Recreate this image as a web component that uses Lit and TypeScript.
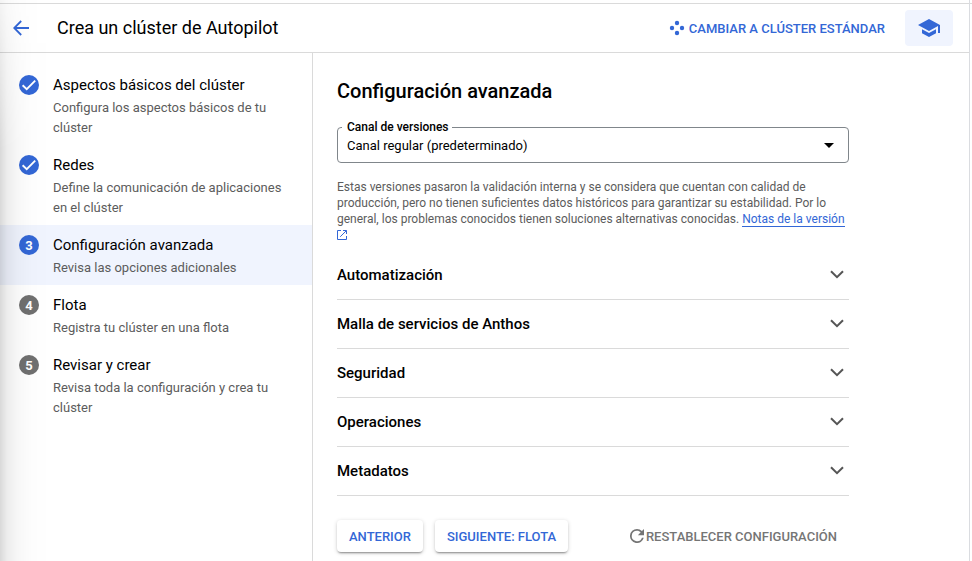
import { LitElement, html, css } from "lit";
import { customElement, property } from "lit/decorators.js";

interface Step {
  title: string;
  text: string;
  state: "done" | "current" | "pending";
}

const STEPS: Step[] = [
  { title: "Aspectos básicos del clúster", text: "Configura los aspectos básicos de tu clúster", state: "done" },
  { title: "Redes", text: "Define la comunicación de aplicaciones en el clúster", state: "done" },
  { title: "Configuración avanzada", text: "Revisa las opciones adicionales", state: "current" },
  { title: "Flota", text: "Registra tu clúster en una flota", state: "pending" },
  { title: "Revisar y crear", text: "Revisa toda la configuración y crea tu clúster", state: "pending" },
];

const SECTIONS = ["Automatización", "Malla de servicios de Anthos", "Seguridad", "Operaciones", "Metadatos"];

@customElement("step-list")
class StepList extends LitElement {
  @property({ attribute: false }) steps: Step[] = [];

  static styles = css`
    :host { display: block; padding-top: 12px; }
    .step { display: flex; padding: 10px 20px 7px 19px; }
    .current { background: #f0f4fe; }
    .badge {
      flex: none; width: 20px; height: 20px; border-radius: 50%; margin-right: 14px;
      display: flex; align-items: center; justify-content: center;
      background: #3367d6; color: #fff; font-size: 13px; font-weight: 700; line-height: 20px;
    }
    .number { padding-top: 2px; }
    .pending .badge { background: #707070; }
    .title { font-size: 15px; line-height: 20px; color: #000; }
    .text { margin-top: 3px; font-size: 13px; line-height: 20px; color: #5c5c5c; }
    svg { display: block; }
  `;

  render() {
    return this.steps.map(
      (s, i) => html`<div class="step ${s.state}">
        <div class="badge">
          ${s.state === "done"
            ? html`<svg width="20" height="20" viewBox="0 0 20 20">
                <path d="M3.6 10.2 7.7 14.1 16.2 5.6" fill="none" stroke="#fff" stroke-width="1.9" />
              </svg>`
            : html`<span class="number">${i + 1}</span>`}
        </div>
        <div>
          <div class="title">${s.title}</div>
          <div class="text">${s.text}</div>
        </div>
      </div>`
    );
  }
}

@customElement("app-root")
class AppRoot extends LitElement {
  static styles = css`
    :host {
      display: block; position: relative; width: 972px; height: 561px; overflow: hidden;
      background: #fff; font-family: Roboto, sans-serif; color: #000;
    }
    svg { display: block; flex: none; }
    .frame { display: flex; height: 561px; }
    .panel { width: 969px; display: flex; flex-direction: column; }
    .gutter { flex: 1; border-left: 1px solid #dadce0; box-sizing: border-box; }
    .edge, .gutter::before { content: ""; display: block; height: 1px; margin-top: 3px; background: #dadada; }
    .edge { flex: none; }
    header {
      display: flex; align-items: center; height: 48px; flex: none;
      border-bottom: 1px solid #dadada; padding: 0 16px 0 13px;
    }
    h1 { margin: 0 auto 0 28px; font-size: 18px; font-weight: 400; line-height: 24px; }
    .switch {
      display: flex; align-items: center; gap: 4px; color: #3367d6;
      font-size: 13px; font-weight: 500; margin-right: 20px;
    }
    .learn {
      width: 48px; height: 36px; border-radius: 4px; background: #f0f4fe;
      display: flex; align-items: center; justify-content: center;
    }
    .body { display: flex; flex: 1; }
    step-list { width: 312px; flex: none; border-right: 1px solid #dadada; }
    main { width: 512px; padding: 24px 0 0 24px; }
    h2 { margin: 0; font-size: 20px; font-weight: 500; line-height: 28px; }
    .select {
      position: relative; box-sizing: border-box; height: 36px; margin-top: 22px; padding: 0 14px 0 9px;
      border: 1px solid #80868b; border-radius: 4px;
      display: flex; align-items: center; justify-content: space-between; font-size: 13px;
    }
    .label {
      position: absolute; left: 4px; top: -8px; padding: 0 3px 0 5px; background: #fff;
      font-size: 12px; font-weight: 500; line-height: 14px;
    }
    .hint { margin: 16px 0 0; font-size: 12px; line-height: 16px; color: #5c5c5c; }
    .link { color: #3367d6; border-bottom: 1px solid #3367d6; }
    .hint svg { margin: 3px 0 3px; }
    .sections { margin-top: 11px; }
    .section {
      display: flex; align-items: center; justify-content: space-between; box-sizing: border-box;
      height: 49px; border-bottom: 1px solid #dadada; font-size: 15px; font-weight: 500; padding-right: 5px;
    }
    .section svg { margin-bottom: 1px; }
    .actions { display: flex; align-items: center; margin-top: 24px; font-size: 13px; font-weight: 500; }
    .button {
      height: 32px; box-sizing: border-box; padding: 0 12px; line-height: 33px; margin-right: 12px;
      border-radius: 4px; color: #3367d6; background: #fff;
      box-shadow: 0 2px 2px -1px rgba(0, 0, 0, 0.38), 0 1px 4px rgba(0, 0, 0, 0.18);
    }
    .reset { display: flex; align-items: center; gap: 2px; margin: 0 12px 0 auto; color: #757575; }
    .shade {
      position: absolute; inset: 0 auto 0 0; width: 50px; pointer-events: none;
      background: linear-gradient(90deg, rgba(0,0,0,.15), rgba(0,0,0,.075) 14%, rgba(0,0,0,.03) 35%, rgba(0,0,0,.008) 65%, transparent);
      -webkit-mask-image: linear-gradient(rgba(0,0,0,.3), #000 150px);
      mask-image: linear-gradient(rgba(0,0,0,.3), #000 150px);
    }
  `;

  render() {
    return html`
      <div class="frame">
        <div class="panel">
          <div class="edge"></div>
          <header>
            <svg width="16" height="16" viewBox="0 0 16 16">
              <path d="M16 8H1.5M8.2 1 1.2 8l7 7" fill="none" stroke="#3367d6" stroke-width="1.8" />
            </svg>
            <h1>Crea un clúster de Autopilot</h1>
            <div class="switch">
              <svg width="16" height="16" viewBox="0 0 16 16" fill="#3367d6">
                <circle cx="8" cy="3" r="2.2" /><circle cx="3" cy="8" r="2.2" />
                <circle cx="13" cy="8" r="2.2" /><circle cx="8" cy="13" r="2.2" />
              </svg>
              <span>CAMBIAR A CLÚSTER ESTÁNDAR</span>
            </div>
            <div class="learn">
              <svg width="24" height="24" viewBox="0 0 24 24" fill="#3367d6">
                <path d="M5 13.18v4L12 21l7-3.82v-4L12 17l-7-3.82zM12 3 1 9l11 6 9-4.91V17h2V9L12 3z" />
              </svg>
            </div>
          </header>
          <div class="body">
            <step-list .steps=${STEPS}></step-list>
            <main>
              <h2>Configuración avanzada</h2>
              <div class="select">
                <span class="label">Canal de versiones</span>
                <span>Canal regular (predeterminado)</span>
                <svg width="10" height="5" viewBox="0 0 10 5"><path d="M0 0h10L5 5z" /></svg>
              </div>
              <p class="hint">
                Estas versiones pasaron la validación interna y se considera que cuentan con calidad de producción, pero
                no tienen suficientes datos históricos para garantizar su estabilidad. Por lo general, los problemas
                conocidos tienen soluciones alternativas conocidas. <span class="link">Notas de la versión</span>
                <svg width="10" height="10" viewBox="0 0 10 10" fill="none" stroke="#3367d6">
                  <path d="M4 .5H.5v9h9V6M6 .5h3.5V4M9.3.7 3.2 6.8" />
                </svg>
              </p>
              <div class="sections">
                ${SECTIONS.map(
                  (name) => html`<div class="section">
                    <span>${name}</span>
                    <svg width="14" height="9" viewBox="0 0 14 9">
                      <path d="M1 1.2l6 6 6-6" fill="none" stroke="#555" stroke-width="2" />
                    </svg>
                  </div>`
                )}
              </div>
              <div class="actions">
                <div class="button">ANTERIOR</div>
                <div class="button">SIGUIENTE: FLOTA</div>
                <div class="reset">
                  <svg width="14" height="14" viewBox="4 4 16 16" fill="#757575">
                    <path d="M17.65 6.35A7.96 7.96 0 0 0 12 4a8 8 0 1 0 7.73 10h-2.08A6 6 0 1 1 12 6c1.66 0 3.14.69 4.22 1.78L13 11h7V4l-2.35 2.35z" />
                  </svg>
                  <span>RESTABLECER CONFIGURACIÓN</span>
                </div>
              </div>
            </main>
          </div>
        </div>
        <div class="gutter"></div>
      </div>
      <div class="shade"></div>
    `;
  }
}
